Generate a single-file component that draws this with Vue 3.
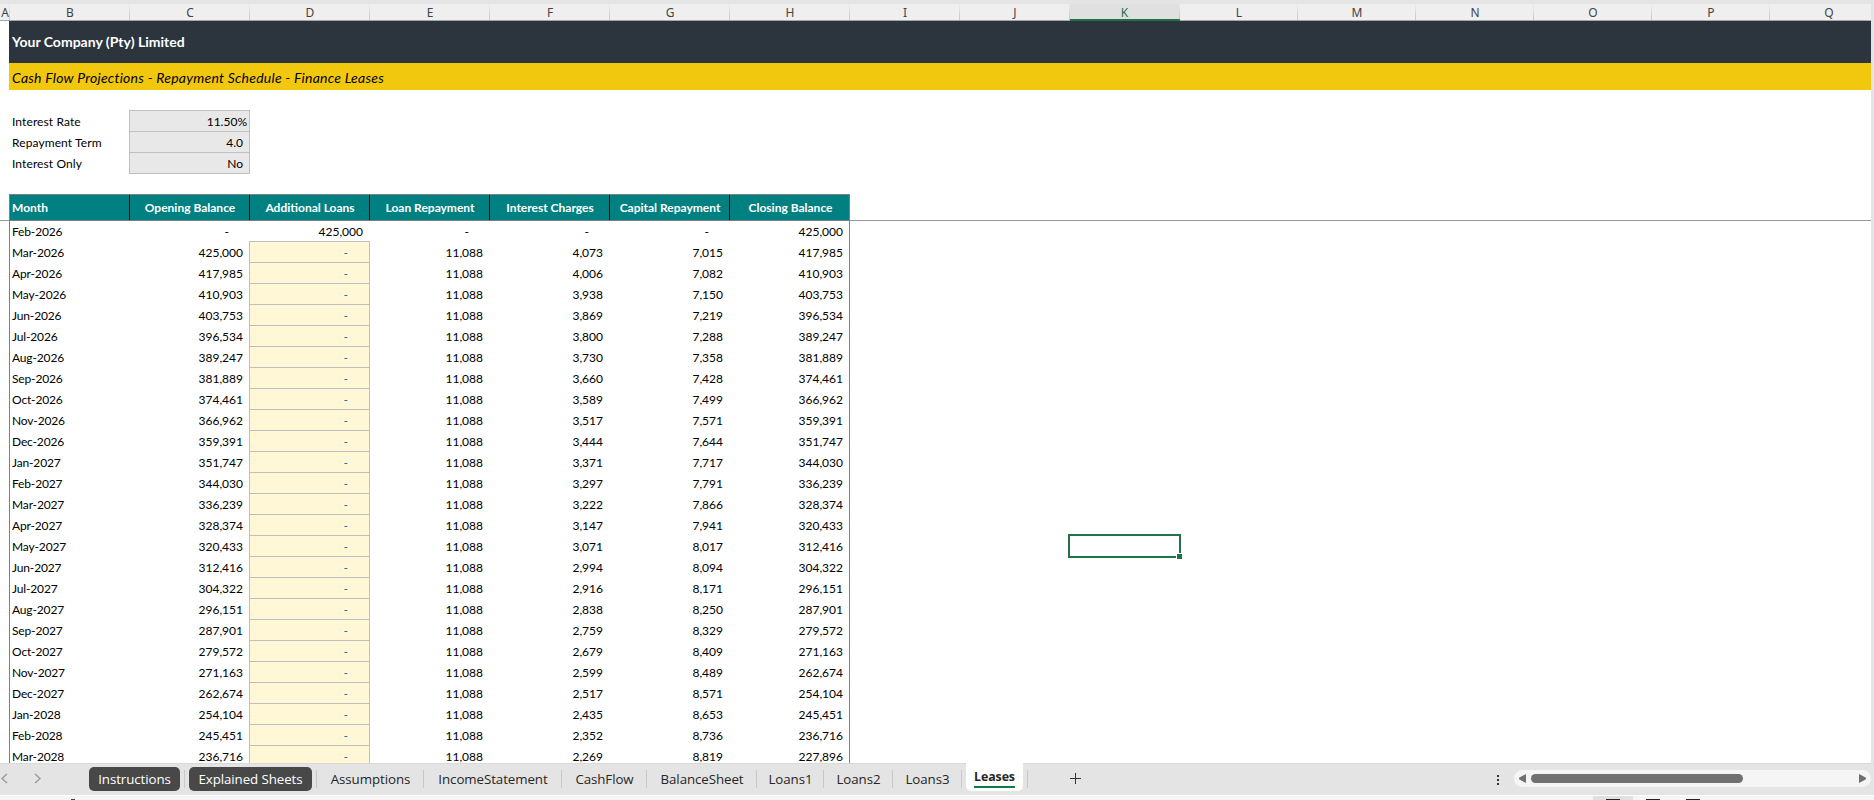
<template>
  <div class="window">
    <div class="columns">
      <div
        v-for="col in columns"
        :key="col.name"
        class="column"
        :class="{ active: col.name === 'K' }"
        :style="{ width: `${col.width}px` }"
      ><span>{{ col.name }}</span></div>
    </div>

    <main class="sheet">
      <div class="company"><span>Your Company (Pty) Limited</span></div>
      <div class="subtitle"><span>Cash Flow Projections - Repayment Schedule - Finance Leases</span></div>

      <div class="params">
        <div v-for="param in params" :key="param.label" class="param">
          <span class="param-label">{{ param.label }}</span>
          <span class="param-value" :class="{ percent: param.value.endsWith('%') }">{{ param.value }}</span>
        </div>
      </div>

      <div class="head-line">
        <div class="row head">
          <div v-for="title in headings" :key="title" class="cell"><span>{{ title }}</span></div>
        </div>
      </div>

      <div class="body">
        <div v-for="row in rows" :key="row[0]" class="row">
          <div
            v-for="(value, i) in row"
            :key="i"
            class="cell"
            :class="{ month: i === 0, dash: value === '-', input: i === 2 && row[0] !== 'Feb-2026' }"
          ><span>{{ value }}</span></div>
        </div>
      </div>

      <div class="selection"><i class="handle"></i></div>
    </main>

    <footer class="tabbar">
      <svg class="nav" width="44" height="32" viewBox="0 0 44 32">
        <path d="M7 11 L2 15.5 L7 20" />
        <path d="M35 11 L40 15.5 L35 20" />
      </svg>
      <div class="tabs">
        <div
          v-for="tab in tabs"
          :key="tab.name"
          class="tab"
          :class="tab.kind"
          :style="{ width: `${tab.width}px` }"
        ><span>{{ tab.name }}</span></div>
      </div>
      <svg class="plus" width="12" height="12" viewBox="0 0 12 12">
        <path d="M5.5 0 V11 M0 5.5 H11" />
      </svg>
      <div class="dots"><i></i><i></i><i></i></div>
      <div class="scroll">
        <svg width="7" height="9" viewBox="0 0 7 9"><path d="M7 0 V9 L0 5.2 V3.8 Z" /></svg>
        <div class="thumb"></div>
        <svg class="right" width="7" height="9" viewBox="0 0 7 9"><path d="M0 0 V9 L7 5.2 V3.8 Z" /></svg>
      </div>
    </footer>

    <div class="status">
      <i class="speck"></i>
      <div class="views">
        <span class="view on"></span>
        <span class="view"></span>
        <span class="view"></span>
      </div>
    </div>
  </div>
</template>

<script setup>
const widths = [10, 120, 120, 120, 120, 120, 120, 120, 110, 110, 110, 118, 118, 118, 118, 118, 118];
const columns = widths.map((width, i) => ({ name: String.fromCharCode(65 + i), width }));

const params = [
  { label: 'Interest Rate', value: '11.50%' },
  { label: 'Repayment Term', value: '4.0' },
  { label: 'Interest Only', value: 'No' }
];

const headings = [
  'Month',
  'Opening Balance',
  'Additional Loans',
  'Loan Repayment',
  'Interest Charges',
  'Capital Repayment',
  'Closing Balance'
];

// month, interest, capital, closing balance
const schedule = [
  ['Mar-2026', '4,073', '7,015', '417,985'],
  ['Apr-2026', '4,006', '7,082', '410,903'],
  ['May-2026', '3,938', '7,150', '403,753'],
  ['Jun-2026', '3,869', '7,219', '396,534'],
  ['Jul-2026', '3,800', '7,288', '389,247'],
  ['Aug-2026', '3,730', '7,358', '381,889'],
  ['Sep-2026', '3,660', '7,428', '374,461'],
  ['Oct-2026', '3,589', '7,499', '366,962'],
  ['Nov-2026', '3,517', '7,571', '359,391'],
  ['Dec-2026', '3,444', '7,644', '351,747'],
  ['Jan-2027', '3,371', '7,717', '344,030'],
  ['Feb-2027', '3,297', '7,791', '336,239'],
  ['Mar-2027', '3,222', '7,866', '328,374'],
  ['Apr-2027', '3,147', '7,941', '320,433'],
  ['May-2027', '3,071', '8,017', '312,416'],
  ['Jun-2027', '2,994', '8,094', '304,322'],
  ['Jul-2027', '2,916', '8,171', '296,151'],
  ['Aug-2027', '2,838', '8,250', '287,901'],
  ['Sep-2027', '2,759', '8,329', '279,572'],
  ['Oct-2027', '2,679', '8,409', '271,163'],
  ['Nov-2027', '2,599', '8,489', '262,674'],
  ['Dec-2027', '2,517', '8,571', '254,104'],
  ['Jan-2028', '2,435', '8,653', '245,451'],
  ['Feb-2028', '2,352', '8,736', '236,716'],
  ['Mar-2028', '2,269', '8,819', '227,896']
];

const rows = [['Feb-2026', '-', '425,000', '-', '-', '-', '425,000']];
schedule.forEach(([month, interest, capital, closing]) => {
  const opening = rows[rows.length - 1][6];
  rows.push([month, opening, '-', '11,088', interest, capital, closing]);
});

const tabs = [
  { name: 'Instructions', width: 100, kind: 'dark' },
  { name: 'Explained Sheets', width: 132, kind: 'dark' },
  { name: 'Assumptions', width: 107 },
  { name: 'IncomeStatement', width: 138 },
  { name: 'CashFlow', width: 85 },
  { name: 'BalanceSheet', width: 110 },
  { name: 'Loans1', width: 67 },
  { name: 'Loans2', width: 69 },
  { name: 'Loans3', width: 69 },
  { name: 'Leases', width: 66, kind: 'current' }
];
</script>

<style>
body {
  margin: 0;
  overflow: hidden;
}
</style>

<style scoped>
.window {
  display: flex;
  flex-direction: column;
  width: 1874px;
  height: 800px;
  overflow: hidden;
  box-sizing: border-box;
  padding-top: 4px;
  background: #e4e4e4;
  font-family: Lato, "Liberation Sans", sans-serif;
  font-size: 12px;
  color: #000;
}
.window * {
  box-sizing: border-box;
}

.columns {
  display: flex;
  flex: none;
  width: 1871px;
  height: 17px;
  overflow: hidden;
  background: #efefef;
}
.column {
  display: flex;
  flex: none;
  justify-content: center;
  height: 17px;
  border-bottom: 1px solid #a6a6a6;
  background: linear-gradient(#ececec, #c6c6c6) right / 1px 100% no-repeat;
  font-family: "Noto Sans", sans-serif;
  font-size: 12px;
  line-height: 18px;
  color: #444;
}
.column.active {
  padding-right: 1px;
  border-bottom: 2px solid #217346;
  background-color: #e0e0e0;
  color: #217346;
}

.sheet {
  position: relative;
  flex: none;
  width: 1871px;
  height: 742px;
  overflow: hidden;
  background: #fff;
}
.company,
.subtitle {
  margin-left: 9px;
  padding-left: 3px;
}
.company {
  height: 42px;
  background: #2c353e;
  color: #fff;
  font-size: 14px;
  font-weight: bold;
  line-height: 42px;
}
.subtitle {
  height: 27px;
  background: #f2c80f;
  font-size: 14px;
  font-style: italic;
  letter-spacing: 0.24px;
  line-height: 29px;
}

.params {
  padding: 20px 0 0 9px;
}
.param {
  display: flex;
  height: 21px;
  line-height: 23px;
}
.param-label {
  width: 120px;
  padding-left: 3px;
  letter-spacing: 0.1px;
}
.param-value {
  width: 121px;
  height: 22px;
  padding-right: 6px;
  border: 1px solid #bfbfbf;
  background: #e8e8e8;
  line-height: 21px;
  text-align: right;
}
.param-value.percent {
  padding-right: 2px;
}

.head-line {
  margin-top: 21px;
  padding-left: 9px;
  background: linear-gradient(#999, #999) bottom / 100% 1px no-repeat;
}
.row {
  display: flex;
  width: 841px;
}
.head {
  height: 27px;
  border: 1px solid #7f7f7f;
  background: #008080;
  color: #fff;
  font-weight: bold;
}
.body {
  width: 841px;
  margin-left: 9px;
  border: 1px solid #7f7f7f;
  border-width: 0 1px;
}
.cell {
  flex: none;
  width: 120px;
  height: 21px;
  padding-right: 7px;
  line-height: 21px;
  text-align: right;
  white-space: nowrap;
}
.head .cell {
  height: 25px;
  padding: 0 0 0 1px;
  border-right: 1px solid #000;
  line-height: 26px;
  text-align: center;
}
.head .cell:first-child {
  padding-left: 2px;
  text-align: left;
}
.head .cell:last-child {
  width: 119px;
  padding-left: 2px;
  border-right: 0;
}
.body .cell:last-child {
  width: 119px;
  padding-right: 6px;
}
.cell.month {
  padding-left: 2px;
  letter-spacing: -0.15px;
  text-align: left;
}
.cell.dash {
  padding-right: 21px;
}
.cell.input {
  width: 121px;
  height: 22px;
  margin: -1px 0 0 -1px;
  padding-right: 21px;
  border: 1px solid #bfbfbf;
  background: #fff7d5;
  color: #0070c0;
}

.selection {
  position: absolute;
  left: 1068px;
  top: 513px;
  width: 113px;
  height: 24px;
  border: 2px solid #217346;
}
.handle {
  position: absolute;
  right: -4px;
  bottom: -4px;
  width: 7px;
  height: 7px;
  border: 1px solid #fff;
  background: #217346;
}

.tabbar {
  display: flex;
  flex: none;
  align-items: flex-start;
  height: 32px;
  background: linear-gradient(#d9d9d9, #d9d9d9) top / 100% 1px no-repeat #e4e4e4;
  font-family: "Open Sans", "Noto Sans", sans-serif;
  font-size: 13.3px;
  letter-spacing: -0.07px;
  color: #262626;
}
.nav {
  flex: none;
  width: 44px;
  margin-right: 41px;
  fill: none;
  stroke: #9a9a9a;
  stroke-width: 1.4;
}
.tabs {
  display: flex;
  height: 32px;
}
.tab {
  height: 28px;
  background: linear-gradient(#c9c9c9, #c9c9c9) right 7px / 1px 18px no-repeat;
  line-height: 32px;
  text-align: center;
  white-space: nowrap;
}
.tab.dark {
  padding: 4px 5px 0 4px;
}
.tab.dark span {
  display: block;
  height: 24px;
  border-radius: 5px;
  background: #484848;
  color: #fff;
  line-height: 25px;
}
.tab.current {
  padding: 0 5px 0 4px;
}
.tab.current span {
  display: block;
  height: 28px;
  border-radius: 0 0 5px 5px;
  background: linear-gradient(#107c41, #107c41) center 23px / 41px 2px no-repeat #fff;
  font-weight: bold;
  font-size: 12.4px;
  letter-spacing: -0.1px;
  line-height: 27px;
}
.plus {
  margin: 10px 0 0 42px;
  fill: none;
  stroke: #333;
}
.dots {
  display: flex;
  flex-direction: column;
  gap: 2px;
  margin: 12px 0 0 auto;
}
.dots i {
  width: 2px;
  height: 2px;
  background: #333;
}
.scroll {
  display: flex;
  align-items: center;
  width: 357px;
  height: 17px;
  margin: 7px 3px 0 15px;
  padding: 0 5px;
  border-radius: 9px;
  background: #f5f5f5;
  fill: #707070;
}
.thumb {
  width: 212px;
  height: 9px;
  margin-left: 5px;
  border-radius: 5px;
  background: #707070;
}
.scroll .right {
  margin-left: auto;
}

.status {
  display: flex;
  flex: none;
  align-items: flex-end;
  justify-content: space-between;
  height: 5px;
  border-top: 1px solid #fff;
  background: #f5f5f5;
}
.speck {
  width: 4px;
  height: 1px;
  margin-left: 71px;
  background: #444;
}
.views {
  display: flex;
  margin-right: 161px;
}
.view {
  width: 40px;
  height: 4px;
  background: linear-gradient(#222, #222) 13px bottom / 14px 1px no-repeat;
}
.view.on {
  background-color: #e0e0e0;
}
</style>
